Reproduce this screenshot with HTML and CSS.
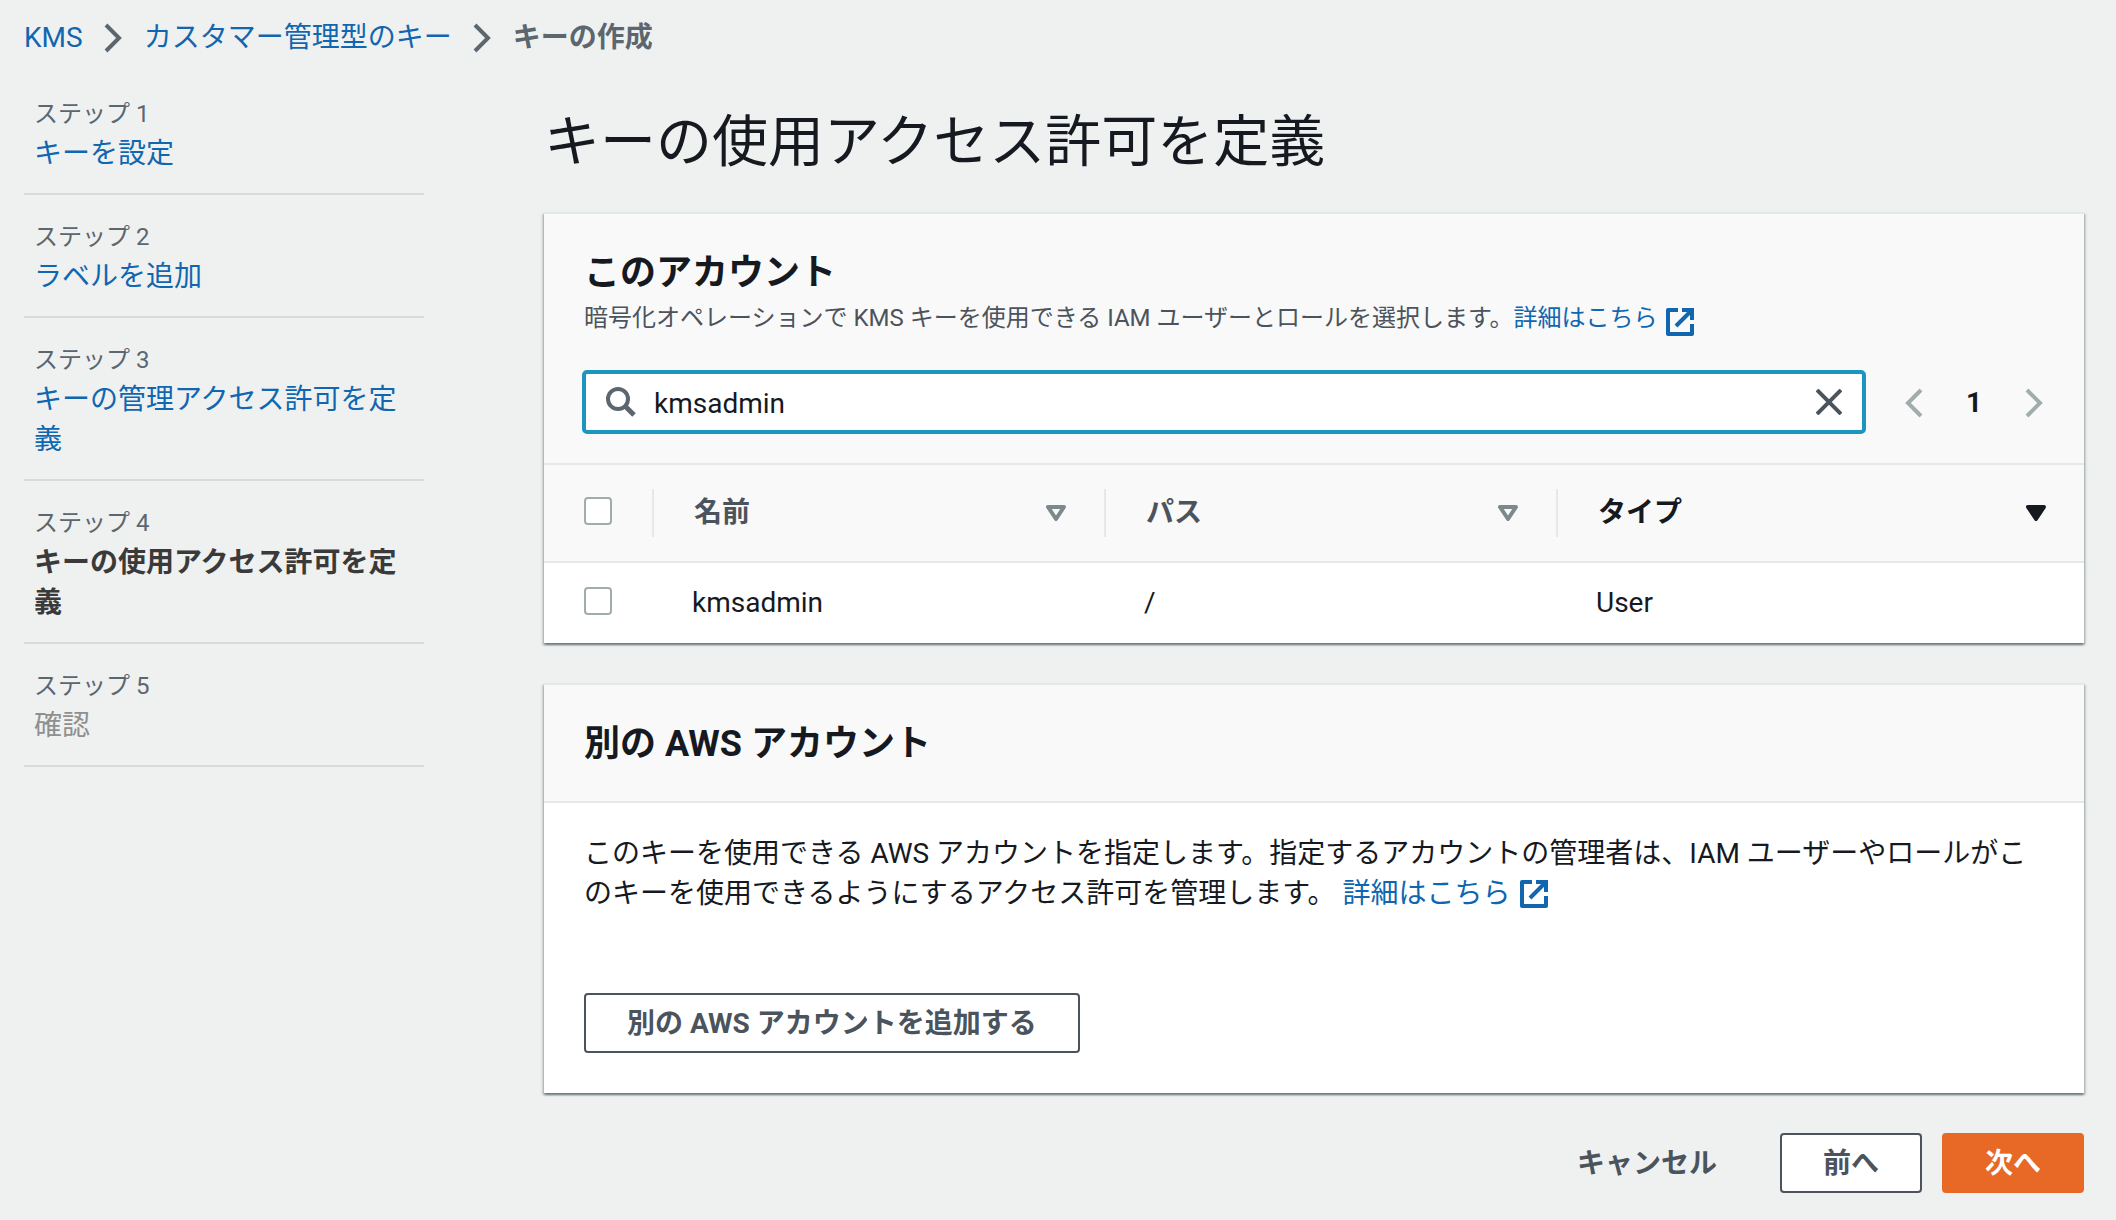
FILE: index.html
```html
<!DOCTYPE html>
<html lang="ja">
<head>
<meta charset="utf-8">
<meta name="viewport" content="width=device-width, initial-scale=1">
<title>キーの作成 - KMS</title>
<link rel="stylesheet" href="styles.css">
</head>
<body>
<svg class="sprite" aria-hidden="true">
  <symbol id="icon-external" viewBox="0 0 28 28">
    <path d="M12 2H2v24h24V16" fill="none" stroke="currentColor" stroke-width="4" stroke-linejoin="round"/>
    <path d="M16 2h10v10M25 3L10 18" fill="none" stroke="currentColor" stroke-width="4"/>
  </symbol>
  <symbol id="icon-chevron" viewBox="0 0 19 30">
    <path d="M2 2l13 13L2 28" fill="none" stroke="currentColor" stroke-width="4"/>
  </symbol>
  <symbol id="icon-sort" viewBox="0 0 20 16">
    <path d="M2 2h16l-8 12z" fill="none" stroke="currentColor" stroke-width="4" stroke-linejoin="round"/>
  </symbol>
  <symbol id="icon-sorted" viewBox="0 0 20 16">
    <path d="M2 2h16l-8 12z" fill="currentColor" stroke="currentColor" stroke-width="4" stroke-linejoin="round"/>
  </symbol>
</svg>

<nav class="breadcrumb" aria-label="パンくずリスト">
  <a href="#">KMS</a>
  <svg class="chevron" aria-hidden="true"><use href="#icon-chevron"/></svg>
  <a href="#">カスタマー管理型のキー</a>
  <svg class="chevron" aria-hidden="true"><use href="#icon-chevron"/></svg>
  <span class="current">キーの作成</span>
</nav>

<div class="layout">
  <nav class="steps" aria-label="ステップ">
    <div class="step"><div class="step-label">ステップ 1</div><a href="#">キーを設定</a></div>
    <div class="step"><div class="step-label">ステップ 2</div><a href="#">ラベルを追加</a></div>
    <div class="step"><div class="step-label">ステップ 3</div><a href="#">キーの管理アクセス許可を定義</a></div>
    <div class="step"><div class="step-label">ステップ 4</div><div class="active">キーの使用アクセス許可を定義</div></div>
    <div class="step"><div class="step-label">ステップ 5</div><div class="disabled">確認</div></div>
  </nav>

  <main>
    <h1>キーの使用アクセス許可を定義</h1>

    <section class="card">
      <header class="card-header account-header">
        <h2>このアカウント</h2>
        <p class="description">暗号化オペレーションで KMS キーを使用できる IAM ユーザーとロールを選択します。<a href="#">詳細はこちら<svg class="external" aria-hidden="true"><use href="#icon-external"/></svg></a></p>
        <div class="tools">
          <div class="search">
            <svg class="magnifier" viewBox="0 0 30 30" aria-hidden="true"><circle cx="12" cy="12" r="10" fill="none" stroke="currentColor" stroke-width="4"/><path d="M19 19l9 9" stroke="currentColor" stroke-width="5"/></svg>
            <input type="text" value="kmsadmin" aria-label="ユーザーとロールを検索">
            <button type="button" class="icon-button clear" aria-label="クリア"><svg viewBox="0 0 26 26"><path d="M1 1l24 24M25 1L1 25" stroke="currentColor" stroke-width="4"/></svg></button>
          </div>
          <div class="pagination">
            <button type="button" class="icon-button" aria-label="前のページ" disabled><svg class="chevron flip"><use href="#icon-chevron"/></svg></button>
            <span class="page">1</span>
            <button type="button" class="icon-button" aria-label="次のページ" disabled><svg class="chevron"><use href="#icon-chevron"/></svg></button>
          </div>
        </div>
      </header>
      <table>
        <colgroup><col class="col-check"><col class="col-data"><col class="col-data"><col></colgroup>
        <thead>
          <tr>
            <th scope="col"><div class="head-cell"><input type="checkbox" aria-label="すべて選択"></div></th>
            <th scope="col"><div class="head-cell"><span>名前</span><svg class="sort" aria-hidden="true"><use href="#icon-sort"/></svg></div></th>
            <th scope="col"><div class="head-cell"><span>パス</span><svg class="sort" aria-hidden="true"><use href="#icon-sort"/></svg></div></th>
            <th scope="col" class="sorted"><div class="head-cell"><span>タイプ</span><svg class="sort" aria-hidden="true"><use href="#icon-sorted"/></svg></div></th>
          </tr>
        </thead>
        <tbody>
          <tr>
            <td><input type="checkbox" aria-label="kmsadmin を選択"></td>
            <td>kmsadmin</td>
            <td>/</td>
            <td>User</td>
          </tr>
        </tbody>
      </table>
    </section>

    <section class="card">
      <header class="card-header">
        <h2>別の AWS アカウント</h2>
      </header>
      <div class="card-body">
        <p>このキーを使用できる AWS アカウントを指定します。指定するアカウントの管理者は、IAM ユーザーやロールがこのキーを使用できるようにするアクセス許可を管理します。 <a href="#">詳細はこちら<svg class="external" aria-hidden="true"><use href="#icon-external"/></svg></a></p>
        <button type="button" class="button">別の AWS アカウントを追加する</button>
      </div>
    </section>

    <div class="actions">
      <button type="button" class="button link">キャンセル</button>
      <button type="button" class="button">前へ</button>
      <button type="button" class="button primary">次へ</button>
    </div>
  </main>
</div>
</body>
</html>
```
FILE: styles.css
```css
* {
  box-sizing: border-box;
}

body {
  margin: 0;
  padding: 18px 32px 24px 24px;
  background: #eff1f1;
  color: #16191f;
  font: 28px/40px Roboto, "Noto Sans CJK JP", sans-serif;
}

h1, h2, p {
  margin: 0;
}

a {
  color: #1166b0;
  text-decoration: none;
}

button, input {
  font: inherit;
}

.sprite {
  position: absolute;
  width: 0;
  height: 0;
}

.chevron {
  display: block;
  flex: none;
  width: 19px;
  height: 30px;
}

.flip {
  transform: scaleX(-1);
}

.breadcrumb {
  display: flex;
  align-items: center;
  gap: 21px;
  color: #5c666f;
}

.current {
  font-weight: 700;
}

.layout {
  display: grid;
  grid-template-columns: 400px minmax(0, 1fr);
  gap: 120px;
  margin-top: 14px;
}

.step {
  padding: 22px 10px 19px;
  border-bottom: 2px solid #d8dbdb;
}

.step-label {
  font-size: 24px;
  color: #5c666f;
}

.step a {
  display: block;
}

.active {
  font-weight: 700;
  color: #3a3a3a;
}

.disabled {
  color: #8e9090;
}

h1 {
  margin: 34px 0;
  font-size: 56px;
  line-height: 72px;
  font-weight: 400;
}

h2 {
  font-size: 36px;
  line-height: 44px;
}

.card {
  margin-bottom: 40px;
  border-top: 2px solid #e5e8e8;
  background: #fff;
  box-shadow: 0 2px 2px rgba(0, 28, 36, 0.4), 2px 2px 2px rgba(0, 28, 36, 0.15), -2px 2px 2px rgba(0, 28, 36, 0.15);
}

.card-header {
  padding: 37px 40px 35px;
  border-bottom: 2px solid #e5e9e9;
  background: #f9f9f9;
}

.account-header {
  padding: 37px 38px 29px;
}

.account-header h2, .description {
  padding-left: 2px;
}

.description {
  padding-top: 5px;
  font-size: 24px;
  line-height: 36px;
  color: #4b535c;
}

.external {
  width: 28px;
  height: 28px;
  margin-left: 10px;
  vertical-align: -5px;
}

.description .external {
  margin-left: 8px;
  vertical-align: top;
  margin-top: 8px;
  margin-bottom: -8px;
}

.tools {
  display: flex;
  align-items: center;
  margin-top: 34px;
}

.search {
  display: flex;
  flex: 1;
  align-items: center;
  height: 64px;
  padding: 0 20px;
  border: 4px solid #1c96c1;
  border-radius: 5px;
  background: #fff;
}

.magnifier {
  flex: none;
  width: 30px;
  height: 30px;
  color: #5c666f;
}

.search input {
  flex: 1;
  min-width: 0;
  height: 44px;
  padding: 2px 18px 0;
  border: 0;
  outline: 0;
  background: none;
  color: inherit;
}

.icon-button {
  display: block;
  padding: 0;
  border: 0;
  background: none;
  color: #4b535c;
}

.icon-button:disabled {
  color: #a1adad;
}

.clear svg {
  display: block;
  width: 26px;
  height: 26px;
}

.pagination {
  display: flex;
  align-items: center;
  gap: 43px;
  padding: 2px 2px 0 38px;
}

.page {
  font-weight: 700;
}

table {
  width: 100%;
  table-layout: fixed;
  border-collapse: separate;
  border-spacing: 0;
}

.col-check {
  width: 110px;
}

.col-data {
  width: 452px;
}

th {
  height: 98px;
  padding: 0;
  border-bottom: 2px solid #e5e9e9;
  background: #f9f9f9;
  color: #4b535c;
  text-align: left;
}

.head-cell {
  display: flex;
  align-items: center;
  justify-content: space-between;
  height: 48px;
  padding: 0 38px 0 40px;
  border-right: 2px solid #e5e9e9;
}

th:last-child .head-cell {
  border-right: 0;
}

.sorted {
  color: #16191f;
}

.sort {
  width: 20px;
  height: 16px;
  color: #7d8a8c;
}

.sorted .sort {
  color: inherit;
}

td {
  height: 80px;
  padding: 0 38px;
}

td:first-child {
  padding: 0 0 0 40px;
}

input[type="checkbox"] {
  display: block;
  flex: none;
  appearance: none;
  width: 28px;
  height: 28px;
  margin: 0 0 4px;
  border: 2px solid #a1adad;
  border-radius: 4px;
  background: #fff;
}

.card-body {
  padding: 31px 40px 40px;
}

.card-body .button {
  margin-top: 79px;
}

.button {
  height: 60px;
  padding: 2px 41px 0;
  border: 2px solid #4b535c;
  border-radius: 4px;
  background: #fff;
  color: #4b535c;
  font-weight: 700;
  line-height: 40px;
}

.link {
  border-color: transparent;
  background: none;
}

.primary {
  border-color: #e86926;
  background: #e86926;
  color: #fff;
}

.actions {
  display: flex;
  justify-content: flex-end;
  gap: 20px;
}
```
